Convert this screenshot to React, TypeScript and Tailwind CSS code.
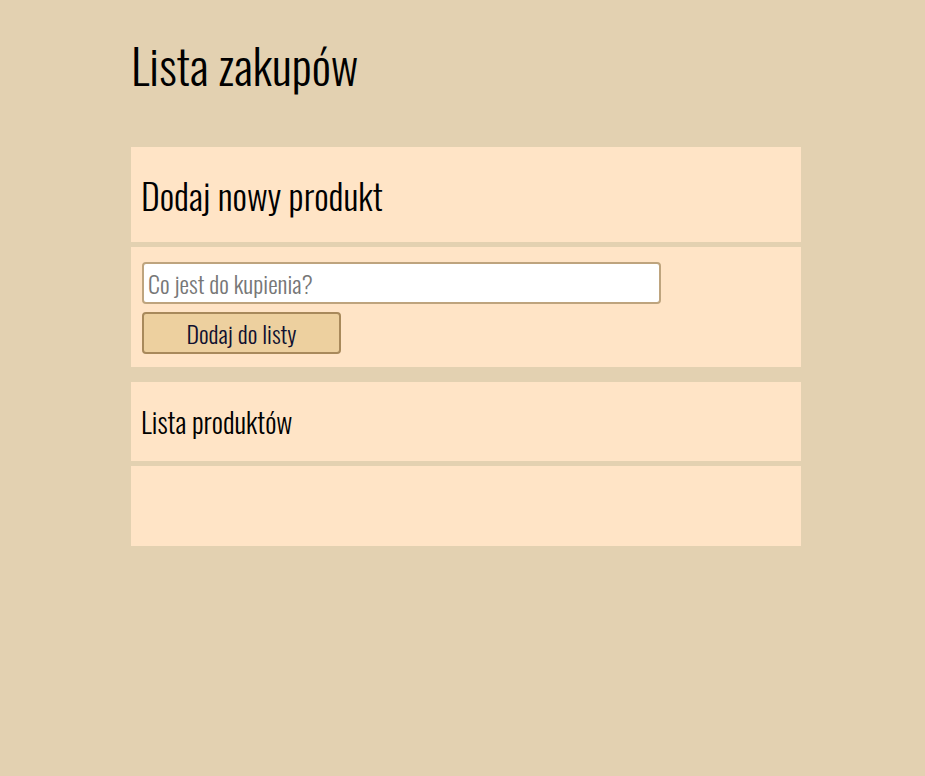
import React from "react";

export default function App() {
  return (
    <div className="min-h-[776px] w-full bg-[#e3d1b1] font-['Oswald','Liberation_Sans_Narrow','DejaVu_Sans_Condensed','Roboto_Condensed',sans-serif] font-light text-black">
      <div className="ml-[131px] w-[670px] pt-[33px]">
        <h1 className="h-[114px] text-[48px] leading-[64px] font-light">Lista zakupów</h1>
        <div className="flex h-[95px] items-center bg-[#ffe4c6] px-[10px]">
          <h2 className="text-[36px] leading-none font-light">Dodaj nowy produkt</h2>
        </div>
        <div className="mt-[5px] flex h-[120px] flex-col gap-[8px] bg-[#ffe4c6] px-[11px] pt-[15px]">
          <input
            type="text"
            placeholder="Co jest do kupienia?"
            className="h-[42px] w-[519px] rounded-[4px] border-2 border-[#bea47e] bg-white px-[4px] text-[24px] font-light text-black outline-none placeholder:text-[#777777]"
          />
          <button className="h-[42px] w-[199px] rounded-[4px] border-2 border-[#a8895b] bg-[#edd09f] text-[24px] font-light text-[#101030]">
            Dodaj do listy
          </button>
        </div>
        <div className="mt-[15px] flex h-[79px] items-center bg-[#ffe4c6] px-[10px]">
          <h3 className="text-[28px] leading-none font-light">Lista produktów</h3>
        </div>
        <div className="mt-[5px] h-[80px] bg-[#ffe4c6]" />
      </div>
    </div>
  );
}
